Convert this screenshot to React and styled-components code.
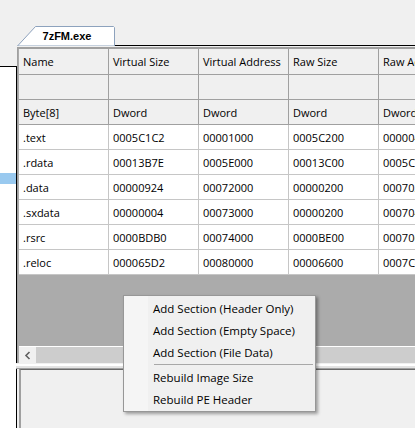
import React from "react";
import styled, { createGlobalStyle } from "styled-components";

const Global = createGlobalStyle`
    html, body {
        margin: 0;
        padding: 0;
        background: #f0f0f0;
    }
`;

const Root = styled.div`
    position: relative;
    width: 415px;
    height: 428px;
    overflow: hidden;
    background: #f0f0f0;
    display: flex;
    flex-direction: column;
    font-family: "Segoe UI", "Open Sans", sans-serif;
    font-size: 11px;
    color: #000;
`;

const TabStrip = styled.div`
    height: 46px;
    display: flex;
    align-items: flex-end;
    padding-left: 17px;
    box-sizing: border-box;
    flex-shrink: 0;
`;

const Tab = styled.div`
    position: relative;
    width: 98px;
    height: 20px;
    display: flex;
    align-items: center;
    justify-content: center;
    padding-left: 2px;
    box-sizing: border-box;
`;

const TabShape = styled.svg`
    position: absolute;
    left: 0;
    top: 0;
`;

const TabLabel = styled.span`
    position: relative;
    font-family: "Liberation Sans", Arial, sans-serif;
    font-weight: bold;
    font-size: 11px;
`;

const StripLine = styled.div`
    flex: 1;
    height: 1px;
    background: #000;
`;

const Body = styled.div`
    flex: 1;
    display: flex;
    min-height: 0;
`;

const LeftPane = styled.div`
    width: 17px;
    flex-shrink: 0;
    padding-top: 20px;
    display: flex;
    flex-direction: column;
`;

const ListBox = styled.div`
    flex: 1;
    background: #fff;
    border-top: 1px solid #000;
    border-right: 1px solid #000;
    padding-top: 106px;
`;

const Selected = styled.div`
    height: 11px;
    background: #99c9ef;
`;

const TabPage = styled.div`
    flex: 1;
    display: flex;
    flex-direction: column;
    min-width: 0;
`;

const Grid = styled.div`
    height: 314px;
    display: flex;
    flex-direction: column;
    border-top: 2px solid #a0a0a0;
    border-left: 1px solid #a0a0a0;
    margin-top: 1px;
    padding-left: 1px;
    background: #ababab;
    overflow: hidden;
`;

const Row = styled.div`
    display: grid;
    grid-template-columns: repeat(5, 90px);
    flex-shrink: 0;
    background: ${(p) => (p.$head ? "#f0f0f0" : "#fff")};
`;

const Cell = styled.div`
    height: ${(p) => p.$h || 25}px;
    box-sizing: border-box;
    padding-left: 4px;
    display: flex;
    align-items: center;
    white-space: nowrap;
    overflow: hidden;
    border-right: 1px solid ${(p) => (p.$head ? "#a0a0a0" : "#c6c6c6")};
    border-bottom: 1px solid ${(p) => (p.$head ? "#a0a0a0" : "#c6c6c6")};
`;

const Empty = styled.div`
    flex: 1;
`;

const ScrollBar = styled.div`
    height: 17px;
    display: flex;
    border-top: 1px solid #fff;
    box-sizing: border-box;
    background: #f0f0f0;
    flex-shrink: 0;
`;

const Arrow = styled.div`
    width: 17px;
    display: flex;
    align-items: center;
    justify-content: center;
`;

const Thumb = styled.div`
    flex: 1;
    background: #cdcdcd;
`;

const Splitter = styled.div`
    height: 6px;
    flex-shrink: 0;
    margin-left: -1px;
    background: linear-gradient(#f0f0f0 0 1px, #fff 1px 3px, #e3e3e3 3px 5px, #a0a0a0 5px 6px);
`;

const BottomPanel = styled.div`
    flex: 1;
    margin-left: 2px;
    border-top: 1px solid #696969;
    border-left: 2px solid #a0a0a0;
    background: #f0f0f0;
`;

const Menu = styled.div`
    position: absolute;
    left: 123px;
    top: 295px;
    width: 193px;
    height: 117px;
    box-sizing: border-box;
    padding: 1px 2px 2px;
    border: 1px solid #979797;
    background: linear-gradient(90deg, #f5f5f5 0 24px, #f0f0f0 24px);
    box-shadow: 2px 2px 3px rgba(0, 0, 0, 0.35);
    font-size: 11.5px;
`;

const Item = styled.div`
    height: 22px;
    display: flex;
    align-items: center;
    padding-left: 27px;
`;

const Separator = styled.div`
    height: 1px;
    margin: 1px 0 1px 28px;
    background: #a8a8a8;
`;

const columns = ["Name", "Virtual Size", "Virtual Address", "Raw Size", "Raw Address"];
const types = ["Byte[8]", "Dword", "Dword", "Dword", "Dword"];
const sections = [
    [".text", "0005C1C2", "00001000", "0005C200", "00000400"],
    [".rdata", "00013B7E", "0005E000", "00013C00", "0005C600"],
    [".data", "00000924", "00072000", "00000200", "00070200"],
    [".sxdata", "00000004", "00073000", "00000200", "00070400"],
    [".rsrc", "0000BDB0", "00074000", "0000BE00", "00070600"],
    [".reloc", "000065D2", "00080000", "00006600", "0007C400"],
];

const menuItems = [
    "Add Section (Header Only)",
    "Add Section (Empty Space)",
    "Add Section (File Data)",
    "-",
    "Rebuild Image Size",
    "Rebuild PE Header",
];

export default function App() {
    return (
        <Root>
            <Global />
            <TabStrip>
                <Tab>
                    <TabShape width="98" height="20" viewBox="0 0 98 20">
                        <path d="M0.5 20 L18.5 0.5 L96.5 0.5 L97.5 1.5 L97.5 20 Z" fill="#fff" stroke="#8da2bd" />
                    </TabShape>
                    <TabLabel>7zFM.exe</TabLabel>
                </Tab>
                <StripLine />
            </TabStrip>
            <Body>
                <LeftPane>
                    <ListBox>
                        <Selected />
                    </ListBox>
                </LeftPane>
                <TabPage>
                    <Grid>
                        <Row $head>
                            {columns.map((c) => (
                                <Cell $head $h={26} key={c}>{c}</Cell>
                            ))}
                        </Row>
                        <Row $head>
                            {columns.map((c) => (
                                <Cell $head key={c}></Cell>
                            ))}
                        </Row>
                        <Row $head>
                            {types.map((t, i) => (
                                <Cell $head key={i}>{t}</Cell>
                            ))}
                        </Row>
                        {sections.map((r) => (
                            <Row key={r[0]}>
                                {r.map((v, i) => (
                                    <Cell key={i}>{v}</Cell>
                                ))}
                            </Row>
                        ))}
                        <Empty />
                        <ScrollBar>
                            <Arrow>
                                <svg width="8" height="9" viewBox="0 0 8 9">
                                    <polyline points="5.5,1 2,4.5 5.5,8" fill="none" stroke="#606060" strokeWidth="1.6" />
                                </svg>
                            </Arrow>
                            <Thumb />
                        </ScrollBar>
                    </Grid>
                    <Splitter />
                    <BottomPanel />
                </TabPage>
            </Body>
            <Menu>
                {menuItems.map((m, i) =>
                    m === "-" ? <Separator key={i} /> : <Item key={i}>{m}</Item>
                )}
            </Menu>
        </Root>
    );
}
